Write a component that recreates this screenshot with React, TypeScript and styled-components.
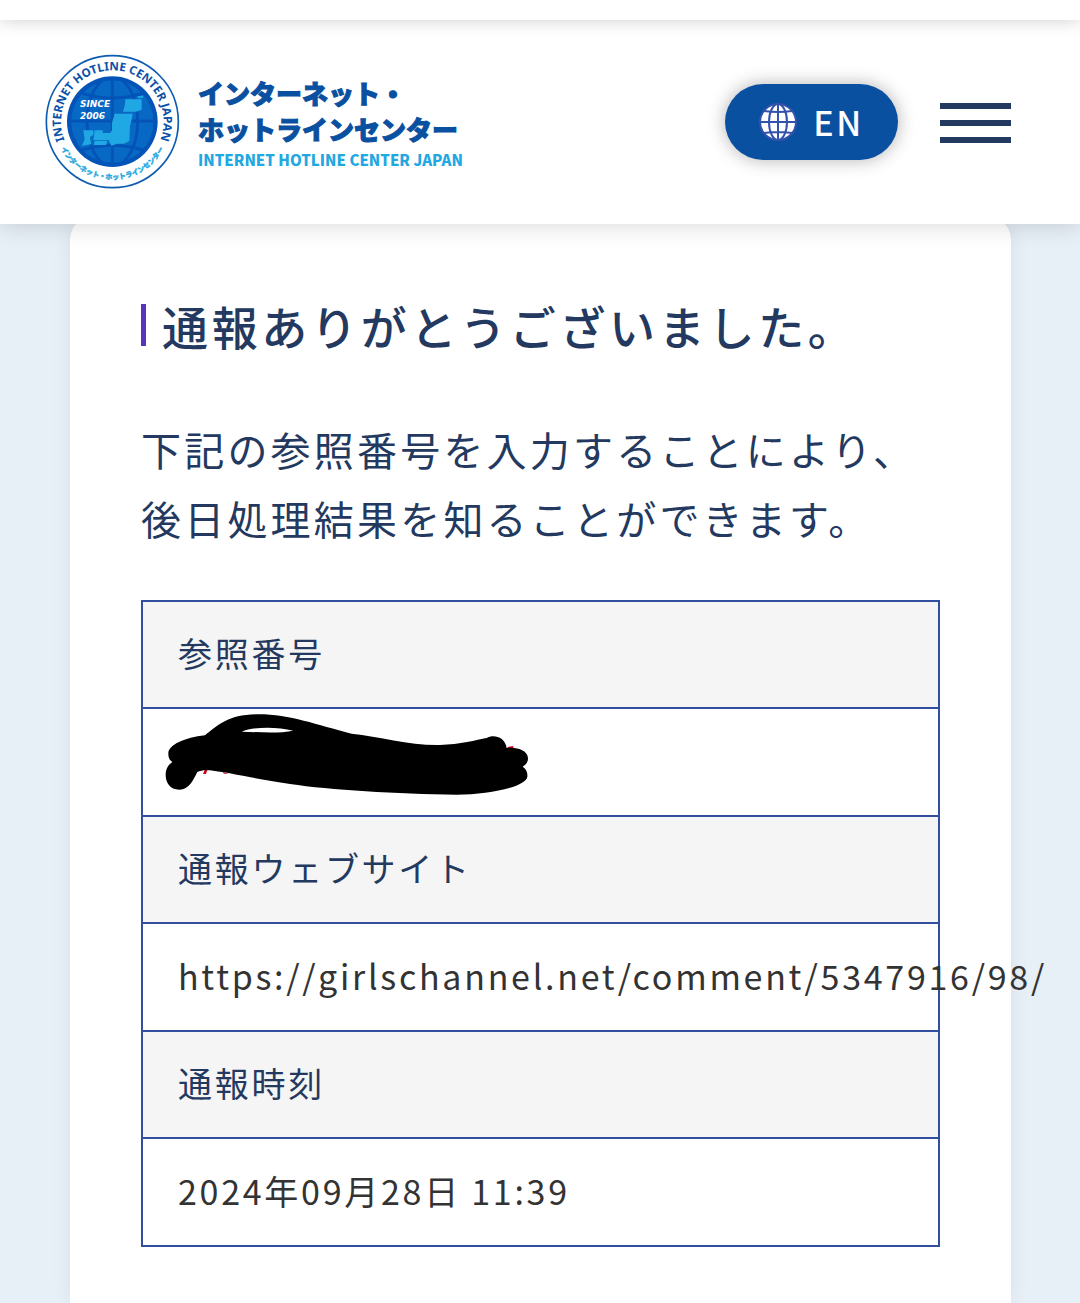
import React from "react";
import styled, { createGlobalStyle } from "styled-components";

const navy = "#243960";
const blue = "#0a50a1";
const line = "#324f9f";
const sans = '"Noto Sans CJK JP", "Noto Sans", sans-serif';

const GlobalStyle = createGlobalStyle`
  *, *::before, *::after { box-sizing: border-box; }
  body {
    margin: 0;
    background: #e7eff7;
    color: ${navy};
    font-family: ${sans};
    overflow-x: hidden;
  }
`;

const Page = styled.div`
  display: flex;
  flex-direction: column;
  min-height: 100vh;
`;

const TopStrip = styled.div`
  position: relative;
  z-index: 3;
  height: 20px;
  background: #fff;
  box-shadow: 0 0 18px rgba(0, 0, 0, 0.2);
`;

const Header = styled.header`
  position: relative;
  z-index: 2;
  display: flex;
  align-items: center;
  justify-content: space-between;
  padding: 34px 69px 35px 45px;
  background: #fff;
  box-shadow: 0 0 24px rgba(0, 0, 0, 0.17);
`;

const Brand = styled.a`
  display: flex;
  align-items: center;
  gap: 18px;
  color: ${blue};
  text-decoration: none;
`;

const BrandText = styled.span`
  display: flex;
  flex-direction: column;
  padding-top: 4px;
`;

const BrandName = styled.span`
  font-size: 26px;
  font-weight: 900;
  line-height: 36px;
  white-space: nowrap;
  -webkit-text-stroke: 1px ${blue};
`;

const BrandSub = styled.span`
  color: #1fa8e1;
  font-size: 15px;
  font-weight: 900;
  line-height: 26px;
  white-space: nowrap;
`;

const Actions = styled.div`
  display: flex;
  align-items: center;
  gap: 42px;
`;

const LanguageLink = styled.a`
  display: flex;
  align-items: center;
  gap: 16px;
  padding: 8px 34px;
  border-radius: 38px;
  background: ${blue};
  box-shadow: 0 0 18px rgba(0, 0, 0, 0.3);
  color: #fff;
  font-size: 34px;
  font-weight: 500;
  letter-spacing: 0.08em;
  line-height: 60px;
  text-decoration: none;
`;

const MenuButton = styled.button`
  display: flex;
  flex-direction: column;
  gap: 11px;
  width: 71px;
  padding: 2px 0 0;
  border: 0;
  background: none;
  cursor: pointer;
`;

const MenuBar = styled.span`
  height: 6px;
  width: 100%;
  background: ${navy};
`;

const Card = styled.main`
  flex: 1;
  margin: -8px 69px 0 70px;
  padding: 73px 71px 56px;
  border-radius: 24px 24px 0 0;
  background: #fff;
  box-shadow: 0 0 20px rgba(0, 0, 0, 0.07);
`;

const Title = styled.h1`
  display: flex;
  align-items: center;
  gap: 16px;
  margin: 0;
  font-size: 46px;
  font-weight: 500;
  letter-spacing: 0.08em;
  line-height: 72px;

  &::before {
    content: "";
    width: 5px;
    height: 42px;
    background: #5535bd;
  }
`;

const Lead = styled.p`
  margin: 54px 0 47px;
  font-size: 40px;
  letter-spacing: 0.08em;
  line-height: 69px;
`;

const Details = styled.table`
  width: 100%;
  table-layout: fixed;
  border-collapse: collapse;
  font-size: 34px;
  letter-spacing: 0.08em;
  line-height: 58px;
  text-align: left;
`;

const Label = styled.th`
  padding: 22px 35px 25px;
  border: 2px solid ${line};
  background: #f5f5f5;
  font-weight: 400;
`;

const Value = styled.td`
  position: relative;
  height: 108px;
  padding: 23px 35px 25px;
  border: 2px solid ${line};
  color: #333;
  white-space: nowrap;
`;

const Scribble = styled.svg`
  position: absolute;
  left: 21px;
  top: 3px;
  width: 366px;
  height: 84px;
`;

function Badge() {
  return (
    <svg width="135" height="135" viewBox="45 43 405 405" aria-hidden="true">
      <defs>
        <clipPath id="disk"><circle cx="247" cy="246" r="124" /></clipPath>
        <path id="upper" d="M 118 330 A 154 154 0 1 1 376 330" />
        <path id="lower" d="M 73 246 A 174 174 0 0 0 421 246" />
      </defs>
      <circle cx="247" cy="246" r="198" fill="#fff" stroke="#0d5cb2" strokeWidth="5" />
      <circle cx="247" cy="246" r="136" fill="#0454b8" />
      <g clipPath="url(#disk)">
        <circle cx="247" cy="246" r="124" fill="#0869c5" />
        <g fill="none" stroke="#0454b8" strokeWidth="9">
          <path d="M247 110V382M110 244H384M140 155Q247 195 354 155M140 337Q247 297 354 337" />
          <ellipse cx="247" cy="246" rx="76" ry="134" />
        </g>
      </g>
      <g fill="#1fa8e3">
        <path d="M286 179H335V210L318 216H279L284 200Z" />
        <path d="M254 222H308L305 240L300 258L298 304L282 312H262L244 318L236 302L240 280L246 272V250Z" />
        <path d="M194 272H218V280H246V300L230 302H190Z" />
        <path d="M160 272H190V286L180 292L184 314L156 318L164 298Z" />
        <path d="M194 304H232L228 316H192Z" />
        <path d="M322 170L340 168V174L324 175Z" />
      </g>
      <g fill="#fff" fontFamily="DejaVu Sans, sans-serif" fontSize="27" fontWeight="700" fontStyle="italic">
        <text x="150" y="203">SINCE</text>
        <text x="150" y="237">2006</text>
      </g>
      <text fill="#0a50a8" fontFamily="Noto Sans, sans-serif" fontSize="35" fontWeight="700" textAnchor="middle">
        <textPath href="#upper" startOffset="50%">INTERNET HOTLINE CENTER JAPAN</textPath>
      </text>
      <text fill="#1fa8e1" stroke="#1fa8e1" fontFamily="Noto Sans CJK JP, sans-serif" fontSize="21" fontWeight="900" textAnchor="middle">
        <textPath href="#lower" startOffset="50%">インターネット・ホットラインセンター</textPath>
      </text>
    </svg>
  );
}

function Globe() {
  return (
    <svg width="38" height="38" viewBox="0 0 38 38" aria-hidden="true">
      <circle cx="19" cy="19" r="18" fill="#fff" stroke="#3352ac" strokeWidth="2" />
      <g fill="none" stroke="#3352ac" strokeWidth="2">
        <path d="M19 1V37M1 19H37M5 8Q19 10 33 8M5 30Q19 28 33 30" />
        <ellipse cx="19" cy="19" rx="9" ry="18" />
      </g>
    </svg>
  );
}

function Redaction() {
  return (
    <Scribble viewBox="102 366 1098 252" role="img" aria-label="黒塗り">
      <path d="M219 552L224 540H232L228 552ZM278 546L296 551H282ZM1128 476L1136 470L1150 468V474Z" fill="#d7001a" />
      <path
        fillRule="evenodd"
        d="M115 490C115 465 165 442 225 436C265 405 295 373 385 373C480 373 560 405 665 431C750 440 840 467 930 465C990 463 1040 450 1070 444C1090 432 1125 440 1130 474C1160 470 1193 480 1194 505C1194 520 1185 525 1178 530C1190 538 1193 548 1192 560C1188 590 1080 614 980 614C800 612 600 600 480 582C380 568 300 548 240 541C222 540 210 542 202 546C190 570 178 598 148 599C118 598 106 575 107 552C108 535 115 525 127 516C117 510 115 500 115 490ZM335 425C370 410 440 410 490 422C450 430 400 427 335 425Z"
      />
    </Scribble>
  );
}

const rows: { label: string; value: React.ReactNode }[] = [
  { label: "参照番号", value: <Redaction /> },
  { label: "通報ウェブサイト", value: "https://girlschannel.net/comment/5347916/98/" },
  { label: "通報時刻", value: "2024年09月28日 11:39" },
];

export default function App() {
  return (
    <Page>
      <GlobalStyle />
      <TopStrip />
      <Header>
        <Brand href="#">
          <Badge />
          <BrandText>
            <BrandName>インターネット・</BrandName>
            <BrandName>ホットラインセンター</BrandName>
            <BrandSub>INTERNET HOTLINE CENTER JAPAN</BrandSub>
          </BrandText>
        </Brand>
        <Actions>
          <LanguageLink href="#en">
            <Globe />
            EN
          </LanguageLink>
          <MenuButton type="button" aria-label="メニュー">
            <MenuBar />
            <MenuBar />
            <MenuBar />
          </MenuButton>
        </Actions>
      </Header>
      <Card>
        <Title>通報ありがとうございました。</Title>
        <Lead>
          下記の参照番号を入力することにより、
          <br />
          後日処理結果を知ることができます。
        </Lead>
        <Details>
          <tbody>
            {rows.map((row) => (
              <React.Fragment key={row.label}>
                <tr>
                  <Label scope="row">{row.label}</Label>
                </tr>
                <tr>
                  <Value>{row.value}</Value>
                </tr>
              </React.Fragment>
            ))}
          </tbody>
        </Details>
      </Card>
    </Page>
  );
}
